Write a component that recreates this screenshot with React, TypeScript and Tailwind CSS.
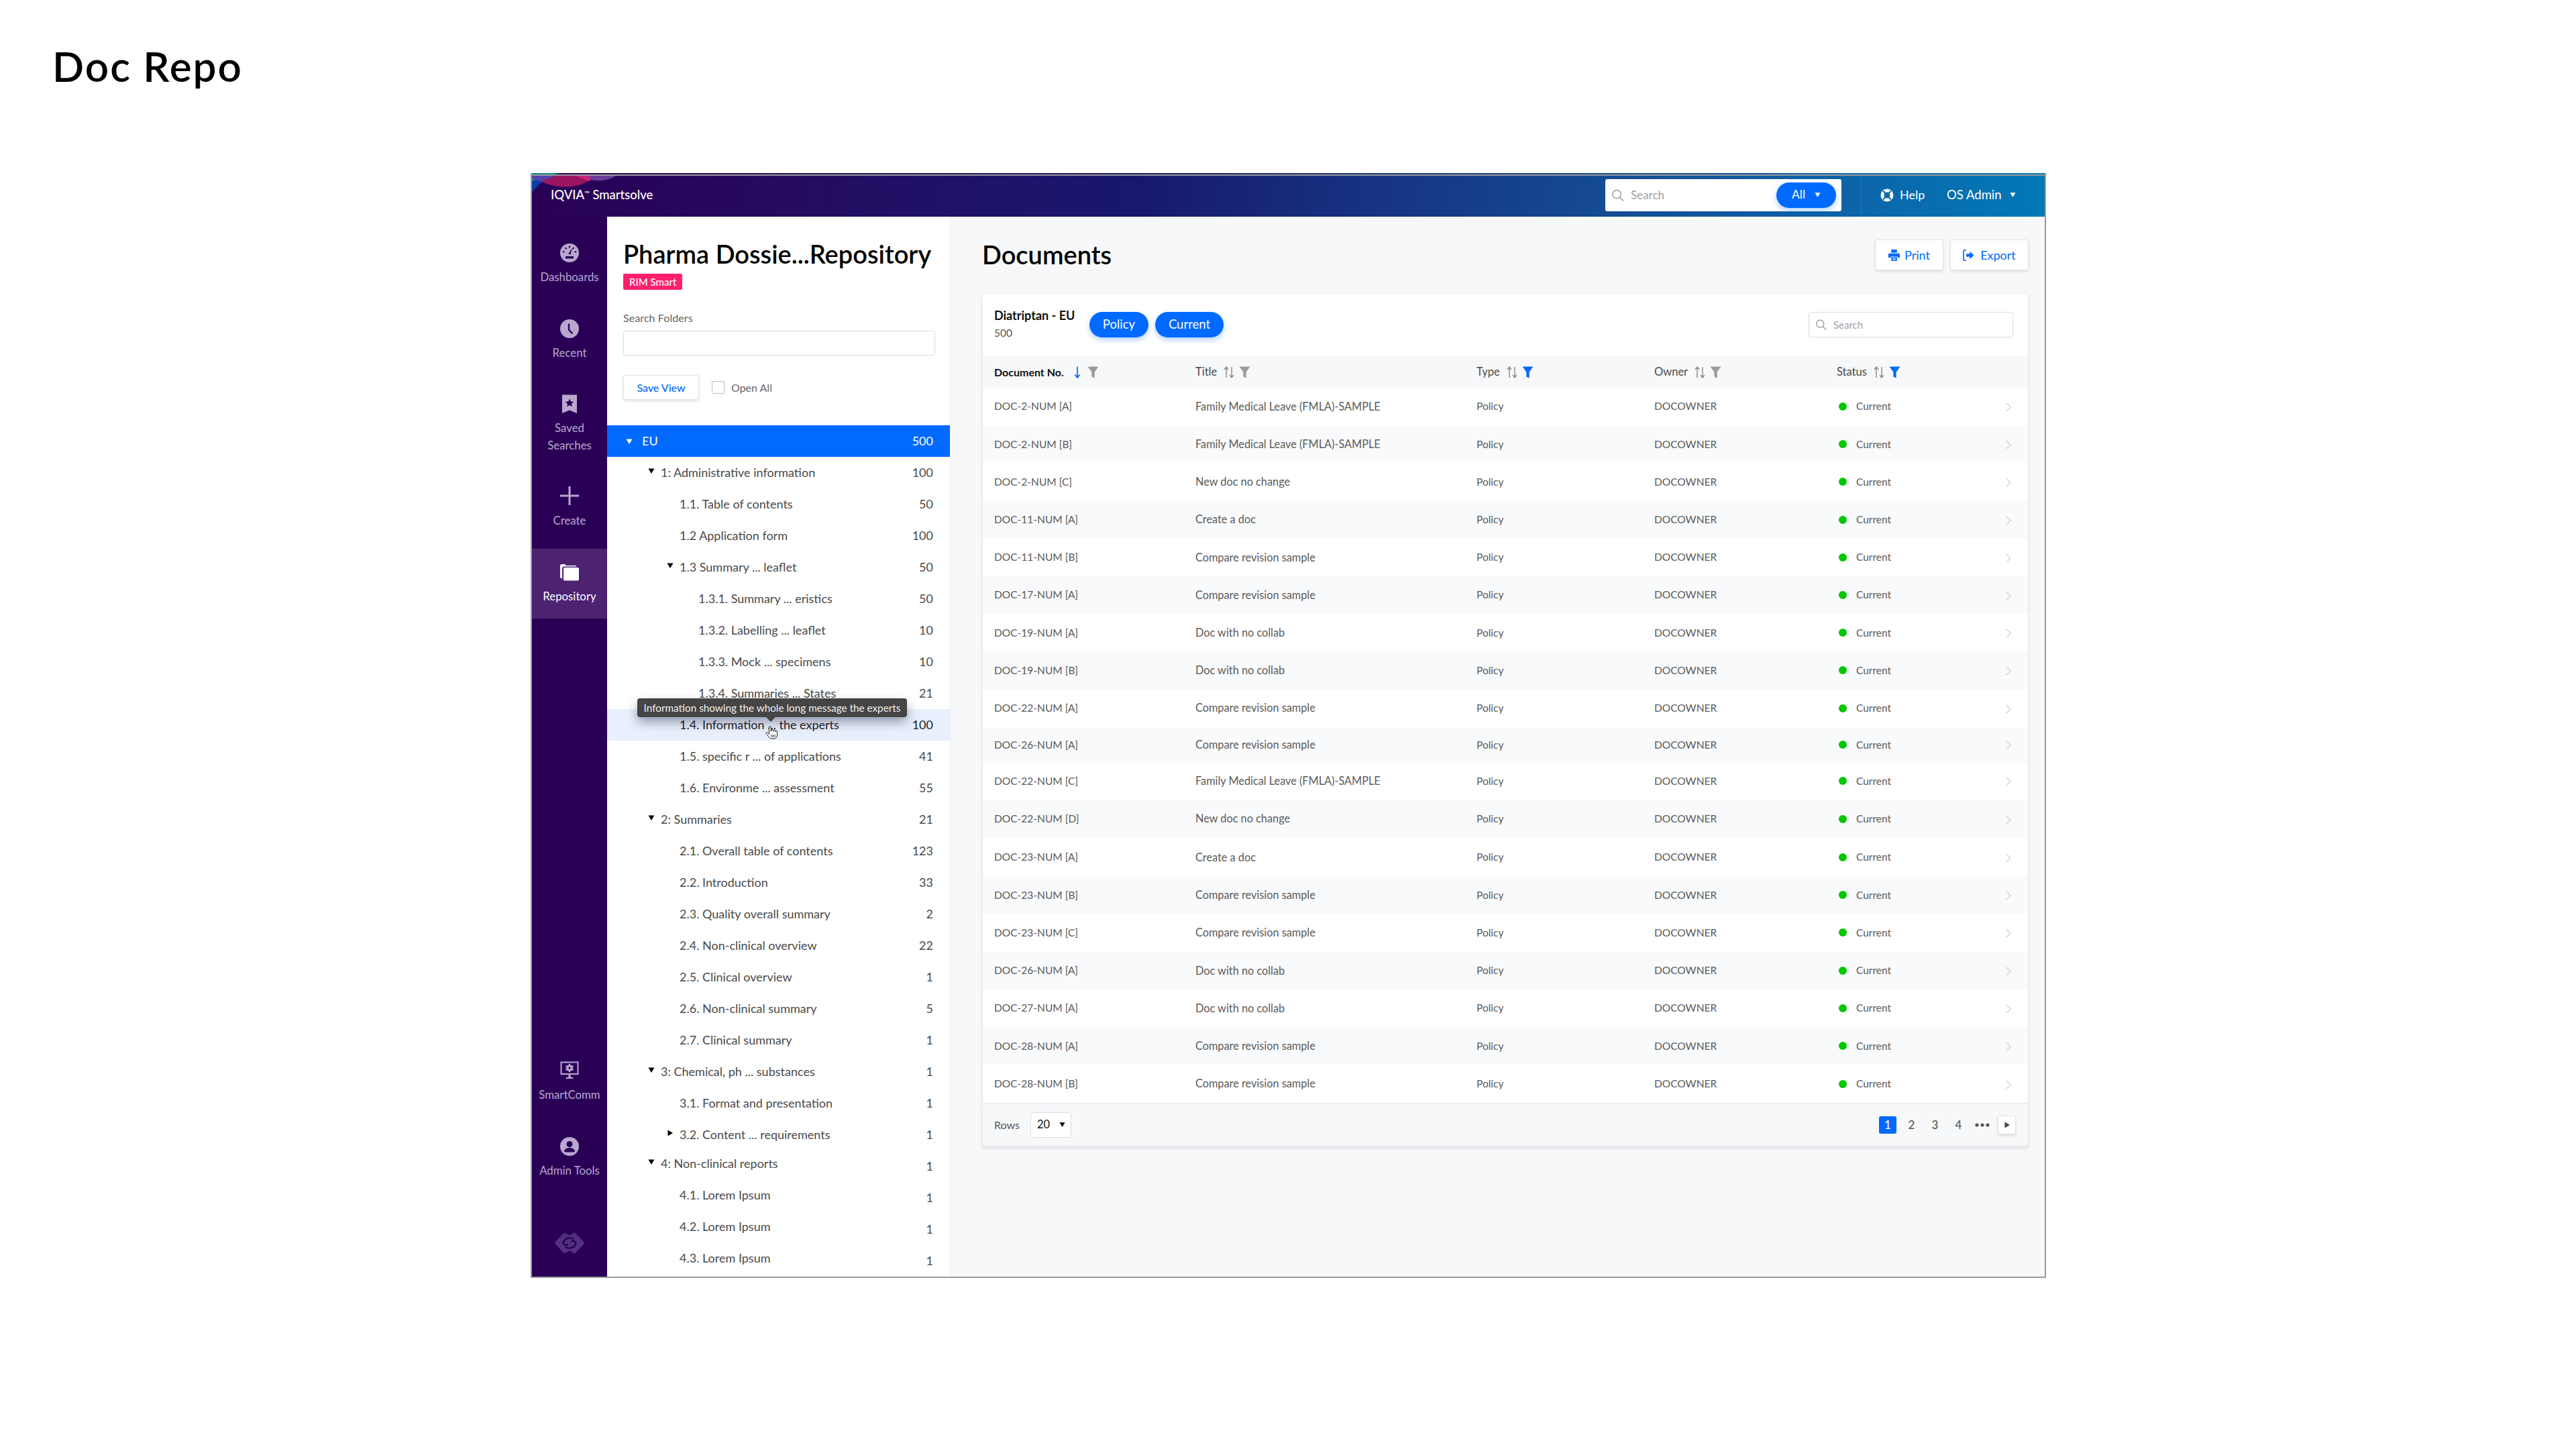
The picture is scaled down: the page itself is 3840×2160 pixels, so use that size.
import React from 'react';

const BLUE = '#0069ff';

function Caret({ dir = 'down', className = '', color = 'currentColor' }: { dir?: 'down' | 'right'; className?: string; color?: string }) {
  return (
    <svg viewBox="0 0 10 10" className={className} fill={color}>
      {dir === 'down' ? <path d="M0.5 1.5h9L5 9z" /> : <path d="M1.5 0.5v9L9 5z" />}
    </svg>
  );
}

function SearchIcon({ className = '' }: { className?: string }) {
  return (
    <svg viewBox="0 0 20 20" className={className} fill="none" stroke="#9a9a9a" strokeWidth="1.6">
      <circle cx="8.5" cy="8.5" r="6.5" />
      <path d="M13.3 13.3L18.5 18.5" strokeLinecap="round" />
    </svg>
  );
}

function Filter({ active = false }: { active?: boolean }) {
  return (
    <svg viewBox="0 0 17 18" className="w-[17px] h-[18px]">
      <path d="M0.5 0.5h16L10.7 8.5V17.5L6.3 15.5V8.5z" fill={active ? BLUE : '#9b9b9b'} />
    </svg>
  );
}

function Sort({ active = false }: { active?: boolean }) {
  if (active) {
    return (
      <svg viewBox="0 0 16 18" className="w-[16px] h-[18px]" fill="none" stroke={BLUE} strokeWidth="1.7">
        <path d="M8 0.5V16M4.5 12.5L8 17l3.5-4.5" />
      </svg>
    );
  }
  return (
    <svg viewBox="0 0 16 18" className="w-[16px] h-[18px]" fill="none" stroke="#8d8d8d" strokeWidth="1.5">
      <path d="M4 17V1.5M1 5L4 1l3 4" />
      <path d="M12 1V16.5M9 13l3 4 3-4" />
    </svg>
  );
}

const ic = 'w-[28px] h-[28px]';
const P = '#b9a7d0';
const D = '#2a0057';

const Gauge = () => (
  <svg viewBox="0 0 28 28" className={ic}>
    <circle cx="14" cy="14" r="14" fill={P} />
    <path d="M14 3.5v3M7.5 6l1.8 2.3M3.8 12l2.8.9M24.2 12l-2.8.9M20.5 6l-1.8 2.3" stroke={D} strokeWidth="2" />
    <path d="M12.2 15.5L18 6.8l-2.6 9.8z" fill={D} />
    <rect x="8" y="19" width="12" height="3.4" fill={D} />
  </svg>
);
const Clock = () => (
  <svg viewBox="0 0 28 28" className={ic}>
    <circle cx="14" cy="14" r="14" fill={P} />
    <path d="M13 6.5v9l5.5 6" fill="none" stroke={D} strokeWidth="2.4" />
  </svg>
);
const Saved = () => (
  <svg viewBox="0 0 28 28" className={ic}>
    <path d="M3 0.5h22v27.5L14 23.5 3 28z" fill={P} />
    <path d="M14 6.5l1.9 4 4.3.5-3.2 2.9.9 4.3-3.9-2.2-3.9 2.2.9-4.3-3.2-2.9 4.3-.5z" fill={D} />
  </svg>
);
const Plus = () => (
  <svg viewBox="0 0 28 28" className={ic}>
    <path d="M14 0v28M0 14h28" stroke={P} strokeWidth="3" />
  </svg>
);
const Folder = () => (
  <svg viewBox="0 0 28 26" className="w-[28px] h-[26px]">
    <path d="M0 3.5A2.5 2.5 0 0 1 2.5 1H7l2 2h13.5a2 2 0 0 1 2 1.5H6.5A3.5 3.5 0 0 0 3 8v14.500A3 3 0 0 1 0 20z" fill="#fff" />
    <rect x="5" y="6" width="23" height="19.500" rx="2" fill="#fff" />
  </svg>
);
const Monitor = () => (
  <svg viewBox="0 0 28 28" className={ic}>
    <path d="M0.500 0.500h27v19.500h-27z" fill={P} />
    <rect x="2.500" y="2.500" width="23" height="15.500" fill={D} />
    <circle cx="14" cy="10" r="4.800" fill={P} />
    <path d="M14 3.800v2.500M14 13.700v2.500M8.500 7l2.200 1.300M17.300 11.700l2.200 1.300M8.500 13l2.200-1.300M17.300 8.300l2.200-1.300" stroke={P} strokeWidth="2.200" />
    <circle cx="14" cy="10" r="1.700" fill={D} />
    <path d="M12.500 20h3v3.500c2.500 0 4 1 4.500 2.500H8c.5-1.500 2-2.500 4.500-2.500z" fill={P} />
  </svg>
);
const User = () => (
  <svg viewBox="0 0 28 28" className={ic}>
    <circle cx="14" cy="14" r="14" fill={P} />
    <circle cx="14" cy="10.500" r="4.500" fill={D} />
    <path d="M6 22c0-4 3.500-6 8-6s8 2 8 6c-2 .8-14 .8-16 0z" fill={D} />
  </svg>
);
const Logo = () => (
  <svg viewBox="0 0 44 34" className="w-[44px] h-[34px]">
    <path d="M4 17L15 5.500 22 10 29 5.500 40 17 29 28.500 22 24 15 28.500z" fill="#53307f" stroke="#53307f" strokeWidth="7" strokeLinejoin="round" />
    <path d="M27 10.500C22 8 15 10 13 15c-1.500 4 3 6.500 6 4.500" fill="none" stroke={D} strokeWidth="2.400" strokeLinecap="round" />
    <path d="M17 23.500c5 2.500 12 .5 14-4.500 1.500-4-3-6.500-6-4.500" fill="none" stroke={D} strokeWidth="2.400" strokeLinecap="round" />
  </svg>
);

function SideLabel({ children, active = false }: { children: React.ReactNode; active?: boolean }) {
  return (
    <span className={`text-[16.800px] leading-[26px] text-center whitespace-nowrap ${active ? 'text-white' : 'text-[#b9a7d0]'}`}>{children}</span>
  );
}

function Sidebar() {
  return (
    <aside className="w-[112px] shrink-0 bg-[#2a0057] flex flex-col items-center">
      <div className="mt-[40px]"><Gauge /></div>
      <div className="mt-[9px]"><SideLabel>Dashboards</SideLabel></div>
      <div className="mt-[50px]"><Clock /></div>
      <div className="mt-[9px]"><SideLabel>Recent</SideLabel></div>
      <div className="mt-[49px]"><Saved /></div>
      <div className="mt-[9px] flex flex-col"><SideLabel>Saved</SideLabel><SideLabel>Searches</SideLabel></div>
      <div className="mt-[48px]"><Plus /></div>
      <div className="mt-[10px]"><SideLabel>Create</SideLabel></div>
      <div className="mt-[29px] w-full h-[104px] bg-[#4d2271] flex flex-col items-center pt-[22px]">
        <Folder />
        <div className="mt-[10px]"><SideLabel active>Repository</SideLabel></div>
      </div>
      <div className="mt-auto"><Monitor /></div>
      <div className="mt-[9px]"><SideLabel>SmartComm</SideLabel></div>
      <div className="mt-[50px]"><User /></div>
      <div className="mt-[9px]"><SideLabel>Admin Tools</SideLabel></div>
      <div className="mt-[78px] mb-[33px]"><Logo /></div>
    </aside>
  );
}

type Node = { label: string; count: string; level: number; caret?: 'down' | 'right' };

const tree: Node[] = [
  { label: '1: Administrative information', count: '100', level: 1, caret: 'down' },
  { label: '1.1. Table of contents', count: '50', level: 2 },
  { label: '1.2 Application form', count: '100', level: 2 },
  { label: '1.3 Summary ... leaflet', count: '50', level: 2, caret: 'down' },
  { label: '1.3.1. Summary ... eristics', count: '50', level: 3 },
  { label: '1.3.2. Labelling ... leaflet', count: '10', level: 3 },
  { label: '1.3.3. Mock ... specimens', count: '10', level: 3 },
  { label: '1.3.4. Summaries ... States', count: '21', level: 3 },
  { label: '1.4. Information ... the experts', count: '100', level: 2 },
  { label: '1.5. specific r ... of applications', count: '41', level: 2 },
  { label: '1.6. Environme ... assessment', count: '55', level: 2 },
  { label: '2: Summaries', count: '21', level: 1, caret: 'down' },
  { label: '2.1. Overall table of contents', count: '123', level: 2 },
  { label: '2.2. Introduction', count: '33', level: 2 },
  { label: '2.3. Quality overall summary', count: '2', level: 2 },
  { label: '2.4. Non-clinical overview', count: '22', level: 2 },
  { label: '2.5. Clinical overview', count: '1', level: 2 },
  { label: '2.6. Non-clinical summary', count: '5', level: 2 },
  { label: '2.7. Clinical summary', count: '1', level: 2 },
  { label: '3: Chemical, ph ... substances', count: '1', level: 1, caret: 'down' },
  { label: '3.1. Format and presentation', count: '1', level: 2 },
  { label: '3.2. Content ... requirements', count: '1', level: 2, caret: 'right' },
];

const tree2: Node[] = [
  { label: '4: Non-clinical reports', count: '1', level: 1, caret: 'down' },
  { label: '4.1. Lorem Ipsum', count: '1', level: 2 },
  { label: '4.2. Lorem Ipsum', count: '1', level: 2 },
  { label: '4.3. Lorem Ipsum', count: '1', level: 2 },
];

function TreeRow({ n, shift }: { n: Node; shift?: boolean }) {
  const hover = n.label.startsWith('1.4.');
  const pad = n.level === 1 ? 'pl-[80px]' : n.level === 2 ? 'pl-[108px]' : 'pl-[136px]';
  return (
    <div className={`relative h-[47px] shrink-0 flex items-center pr-[25px] text-[18px] ${pad} ${hover ? 'bg-[#e8f0fd] text-[#222222]' : 'text-[#4a4a4a]'}`}>
      <div className={`flex-1 relative ${shift ? '-mt-[8px]' : ''}`}>
        {n.caret && (
          <Caret dir={n.caret} color="#000" className="absolute top-[6px] -left-[19px] w-[10px] h-[10px]" />
        )}
        <span>{n.label}</span>
      </div>
      <span>{n.count}</span>
    </div>
  );
}

function FolderPanel() {
  return (
    <section className="relative w-[512px] shrink-0 bg-white border-r border-[#eeeeee] flex flex-col overflow-hidden">
      <div className="pl-[24px] pr-[22px]">
        <h2 className="mt-[32px] text-[38px] leading-[46px] font-semibold text-black whitespace-nowrap">Pharma Dossie...Repository</h2>
        <span className="mt-[7px] inline-flex items-center h-[24px] px-[9px] rounded-[2px] bg-[#ff1f6e] text-white text-[15px] font-medium">RIM Smart</span>
        <div className="mt-[32px] h-[20px] leading-[20px] text-[16.200px] text-[#666666]">Search Folders</div>
        <div className="mt-[9px] h-[37px] rounded-[3px] border border-[#dddddd] bg-white" />
        <div className="mt-[29px] flex items-center">
          <button className="w-[113px] h-[37px] rounded-[3px] border border-[#e3e3e3] bg-white shadow-[0_2px_4px_rgba(0,0,0,0.12)] text-[16px] font-medium text-[#0069ff]">Save View</button>
          <span className="ml-[19px] w-[19px] h-[19px] rounded-[2px] border border-[#bdbdbd] bg-white" />
          <span className="ml-[10px] text-[16px] text-[#666666]">Open All</span>
        </div>
      </div>
      <div className="mt-[38px] flex flex-col text-[18px]">
        <div className="relative h-[47px] flex items-center pl-[52px] pr-[25px] bg-[#0069ff] text-white">
          <Caret color="#fff" className="absolute left-[28px] top-[19px] w-[10px] h-[10px]" />
          <span className="flex-1">EU</span>
          <span>500</span>
        </div>
        {tree.map((n) => <TreeRow key={n.label} n={n} />)}
        {tree2.map((n) => <TreeRow key={n.label} n={n} shift />)}
      </div>
      {/* tooltip over the hovered row */}
      <div className="absolute left-[45px] top-[718px] w-[402px] h-[28px] rounded-[4px] bg-[#454545] text-[#efefef] text-[15.300px] flex items-center justify-center whitespace-nowrap shadow-[0_8px_16px_rgba(30,30,60,0.4)]">
        Information showing the whole long message the experts
        <span className="absolute left-[192px] -bottom-[7px] w-0 h-0 border-x-[7px] border-x-transparent border-t-[7px] border-t-[#454545]" />
      </div>
      <svg viewBox="0 0 18 20" className="absolute left-[236px] top-[759px] w-[18px] h-[20px]">
        <path d="M5.500 2a1.300 1.300 0 0 1 2.600 0v6h.9V6.500a1.200 1.200 0 0 1 2.400 0V8h.8V7.300a1.200 1.200 0 0 1 2.400 0V8.500h.6V8a1.200 1.200 0 0 1 2.300 0v5.500c0 3-1.800 5.500-4.500 5.500H9c-2 0-3-1-4-2.500L1 11.500c-.8-1.500 1-2.600 2-1.500l2.500 2.500z" fill="#fff" stroke="#222" strokeWidth="1" />
        <path d="M9 13v4M11.500 13v4M14 13v4" stroke="#222" strokeWidth="1" />
      </svg>
    </section>
  );
}

const rows: [string, string, string][] = [
  ['DOC-2-NUM [A]', 'Family Medical Leave (FMLA)-SAMPLE', 'h-[56.200px]'],
  ['DOC-2-NUM [B]', 'Family Medical Leave (FMLA)-SAMPLE', 'h-[56.200px]'],
  ['DOC-2-NUM [C]', 'New doc no change', 'h-[56.200px]'],
  ['DOC-11-NUM [A]', 'Create a doc', 'h-[56.200px]'],
  ['DOC-11-NUM [B]', 'Compare revision sample', 'h-[56.200px]'],
  ['DOC-17-NUM [A]', 'Compare revision sample', 'h-[56.200px]'],
  ['DOC-19-NUM [A]', 'Doc with no collab', 'h-[56.200px]'],
  ['DOC-19-NUM [B]', 'Doc with no collab', 'h-[56.200px]'],
  ['DOC-22-NUM [A]', 'Compare revision sample', 'h-[56.200px]'],
  ['DOC-26-NUM [A]', 'Compare revision sample', 'h-[53px]'],
  ['DOC-22-NUM [C]', 'Family Medical Leave (FMLA)-SAMPLE', 'h-[55px]'],
  ['DOC-22-NUM [D]', 'New doc no change', 'h-[58px]'],
  ['DOC-23-NUM [A]', 'Create a doc', 'h-[56.300px]'],
  ['DOC-23-NUM [B]', 'Compare revision sample', 'h-[56.300px]'],
  ['DOC-23-NUM [C]', 'Compare revision sample', 'h-[56.300px]'],
  ['DOC-26-NUM [A]', 'Doc with no collab', 'h-[56.300px]'],
  ['DOC-27-NUM [A]', 'Doc with no collab', 'h-[56.300px]'],
  ['DOC-28-NUM [A]', 'Compare revision sample', 'h-[56.300px]'],
  ['DOC-28-NUM [B]', 'Compare revision sample', 'h-[56.300px]'],
];

const cols = 'grid grid-cols-[300px_419px_265px_272px_1fr] pl-[17px] items-center';

function Head({ label, strong, sortActive, filterActive }: { label: string; strong?: boolean; sortActive?: boolean; filterActive?: boolean }) {
  return (
    <div className="flex items-center">
      <span className={strong ? 'font-bold text-[#111111] text-[16px]' : 'text-[#4a4a4a] text-[16.500px]'}>{label}</span>
      <span className={`${strong ? 'ml-[12px]' : 'ml-[10px]'} flex items-center gap-[7px]`}>
        <Sort active={sortActive} />
        <Filter active={filterActive} />
      </span>
    </div>
  );
}

function DocTable() {
  return (
    <div className="mt-[34px] rounded-[4px] border border-[#eeeeee] bg-white shadow-[0_3px_5px_rgba(0,0,0,0.1)] overflow-hidden">
      <div className="h-[93px] flex pl-[17px] pr-[22px] relative">
        <div className="mt-[19px] w-[142px] shrink-0">
          <div className="text-[18px] leading-[26px] font-bold text-[#111111] whitespace-nowrap">Diatriptan - EU</div>
          <div className="text-[15.500px] leading-[26px] text-[#555555]">500</div>
        </div>
        <div className="mt-[27px] flex gap-[10px] h-[38px]">
          <span className="w-[88px] rounded-full bg-[#0069ff] text-white text-[18.500px] flex items-center justify-center shadow-[0_4px_8px_rgba(0,105,255,0.3)]">Policy</span>
          <span className="w-[102px] rounded-full bg-[#0069ff] text-white text-[18.500px] flex items-center justify-center shadow-[0_4px_8px_rgba(0,105,255,0.3)]">Current</span>
        </div>
        <div className="ml-auto mt-[27px] w-[305px] h-[38px] rounded-[3px] border border-[#dddddd] flex items-center pl-[9px]">
          <SearchIcon className="w-[17px] h-[20px]" />
          <span className="ml-[10px] text-[15px] text-[#a0a0a0]">Search</span>
        </div>
      </div>
      <div className={`${cols} h-[47px] bg-[#f7f8fa]`}>
        <Head label="Document No." strong sortActive />
        <Head label="Title" />
        <Head label="Type" filterActive />
        <Head label="Owner" />
        <Head label="Status" filterActive />
      </div>
      <div className="flex flex-col">
        {rows.map(([no, title, h], i) => (
          <div key={i} className={`${cols} ${h} text-[15.500px] text-[#5a5a5a] ${i % 2 ? 'bg-[#f9fafb]' : 'bg-white'}`}>
            <span>{no}</span>
            <span className="text-[16.300px]">{title}</span>
            <span>Policy</span>
            <span>DOCOWNER</span>
            <div className="flex items-center pl-[3px] pr-[25px]">
              <span className="w-[12px] h-[12px] rounded-full bg-[#00c800]" />
              <span className="ml-[14px]">Current</span>
              <svg viewBox="0 0 8 14" className="ml-auto mt-[2px] w-[8px] h-[14px]" fill="none" stroke="#cfcfcf" strokeWidth="1.300">
                <path d="M1 1l6 6-6 6" />
              </svg>
            </div>
          </div>
        ))}
      </div>
      <div className="h-[64px] border-t-2 border-[#eeeeee] bg-[#f7f8fa] flex items-center pl-[17px] pr-[18px] text-[16px] text-[#555555]">
        <span>Rows</span>
        <div className="ml-[16px] w-[61px] h-[38px] rounded-[4px] border border-[#dddddd] bg-white flex items-center pl-[9px] text-[#111111] text-[16.500px]">
          20
          <Caret color="#000" className="ml-[14px] w-[9px] h-[9px]" />
        </div>
        <div className="ml-auto flex items-center text-[17px] font-medium text-[#555555]">
          <span className="w-[26px] h-[26px] rounded-[3px] bg-[#0069ff] text-white flex items-center justify-center">1</span>
          <span className="w-[35px] text-center ml-[5px]">2</span>
          <span className="w-[35px] text-center">3</span>
          <span className="w-[35px] text-center">4</span>
          <svg viewBox="0 0 22 6" className="ml-[7px] w-[22px] h-[6px]" fill="#555555">
            <circle cx="3" cy="3" r="2.600" /><circle cx="11" cy="3" r="2.600" /><circle cx="19" cy="3" r="2.600" />
          </svg>
          <span className="ml-[12px] w-[27px] h-[28px] rounded-[3px] border border-[#e3e3e3] bg-white shadow-[0_2px_4px_rgba(0,0,0,0.12)] flex items-center justify-center">
            <Caret dir="right" color="#444" className="w-[10px] h-[12px]" />
          </span>
        </div>
      </div>
    </div>
  );
}

function Main() {
  return (
    <main className="flex-1 min-w-0 bg-[#f7f8fa] pl-[47px] pr-[24px]">
      <div className="mt-[34px] h-[46px] flex items-center">
        <h2 className="-mt-[3px] text-[38px] leading-[44px] font-semibold text-black">Documents</h2>
        <div className="ml-auto flex gap-[10px]">
          <button className="w-[102px] h-[46px] rounded-[4px] border border-[#e3e3e3] bg-white shadow-[0_2px_4px_rgba(0,0,0,0.1)] flex items-center justify-center gap-[7px] text-[18px] text-[#0069ff]">
            <svg viewBox="0 0 18 18" className="w-[17px] h-[17px]" fill={BLUE}>
              <path d="M4.500 0h9v5h-9zM1.500 6h15a1.500 1.500 0 0 1 1.500 1.500V13h-3.500v-2h-11v2H0V7.500A1.500 1.500 0 0 1 1.500 6z" />
              <path d="M4.500 12h9v6h-9z" />
              <path d="M6.500 14h5M6.500 16h5" stroke="#fff" />
            </svg>
            Print
          </button>
          <button className="w-[117px] h-[46px] rounded-[4px] border border-[#e3e3e3] bg-white shadow-[0_2px_4px_rgba(0,0,0,0.1)] flex items-center justify-center gap-[9px] text-[18px] text-[#0069ff]">
            <svg viewBox="0 0 18 18" className="w-[17px] h-[17px]">
              <path d="M5 1H2.500A1.500 1.500 0 0 0 1 2.500v13A1.500 1.500 0 0 0 2.500 17H5" fill="none" stroke={BLUE} strokeWidth="1.800" />
              <path d="M5.500 6.500H11V3l6.500 6L11 15v-3.500H5.500z" fill={BLUE} />
            </svg>
            Export
          </button>
        </div>
      </div>
      <DocTable />
    </main>
  );
}

function Header() {
  return (
    <header className="relative h-[65px] shrink-0 bg-gradient-to-r from-[#2a0057] via-[#17186e] via-40% to-[#0079b8] flex items-center">
      <svg viewBox="0 0 130 30" className="absolute left-0 top-0 w-[130px] h-[30px]">
        <path d="M0 4V28L18 10z" fill="#0a3fa8" />
        <path d="M0 0H40L0 12z" fill="#0e8a86" />
        <path d="M0 8C6 10 12 12 16 14L44 4H0z" fill="#5540ad" />
        <path d="M14 12C30 22 60 24 80 14L100 4H36z" fill="#9b1460" />
        <path d="M65 4H100L85 12C78 9 70 7 65 4z" fill="#c5247e" />
        <path d="M84 4H125C115 11 100 13 88 10z" fill="#6a3b9c" />
      </svg>
      <div className="absolute left-0 right-0 top-[2px] h-[2px] bg-[#999999]" />
      <div className="relative ml-[28px] text-[18.500px] font-medium text-white whitespace-nowrap">
        IQVIA<sup className="text-[10px]">™</sup> Smartsolve
      </div>
      <div className="ml-auto mr-[29px] flex items-center h-[48px] w-[352px] rounded-[3px] bg-white pl-[9px]">
        <SearchIcon className="w-[19px] h-[22px]" />
        <span className="ml-[10px] text-[17px] text-[#a0a0a0]">Search</span>
        <span className="ml-auto mr-[8px] w-[89px] h-[38px] rounded-full bg-[#0069ff] text-white text-[17.500px] flex items-center justify-center gap-[14px] shadow-[0_4px_8px_rgba(0,105,255,0.3)]">
          All
          <Caret color="#fff" className="w-[9px] h-[9px]" />
        </span>
      </div>
      <div className="h-full w-px bg-[#1d7fb8]" />
      <svg viewBox="0 0 20 20" className="ml-[28px] w-[20px] h-[20px]">
        <circle cx="10" cy="10" r="9.500" fill="#fff" />
        <circle cx="10" cy="10" r="4.500" fill="#0a6cab" />
        <path d="M4 3.500l3.500 3.500M16 3.500L12.500 7M4 16.500L7.500 13M16 16.500L12.500 13" stroke="#0a6cab" strokeWidth="2.200" />
      </svg>
      <span className="ml-[9px] w-[38px] text-[18px] text-white">Help</span>
      <span className="ml-[32px] w-[84px] text-[18.500px] text-white whitespace-nowrap">OS Admin</span>
      <Caret color="#fff" className="ml-[10px] mr-[43px] w-[9px] h-[9px]" />
    </header>
  );
}

export default function App() {
  return (
    <div className="w-[3840px] h-[2160px] bg-white overflow-hidden" style={{ fontFamily: 'Lato, "Open Sans", sans-serif' }}>
      <h1 className="pl-[78px] pt-[59px] text-[62px] leading-[78px] tracking-[2px] font-semibold text-black">Doc Repo</h1>
      <div className="mt-[121px] ml-[791px] w-[2259px] h-[1647px] flex flex-col border-x-2 border-b-2 border-[#999999] overflow-hidden">
        <Header />
        <div className="flex flex-1 min-h-0">
          <Sidebar />
          <FolderPanel />
          <Main />
        </div>
      </div>
    </div>
  );
}
